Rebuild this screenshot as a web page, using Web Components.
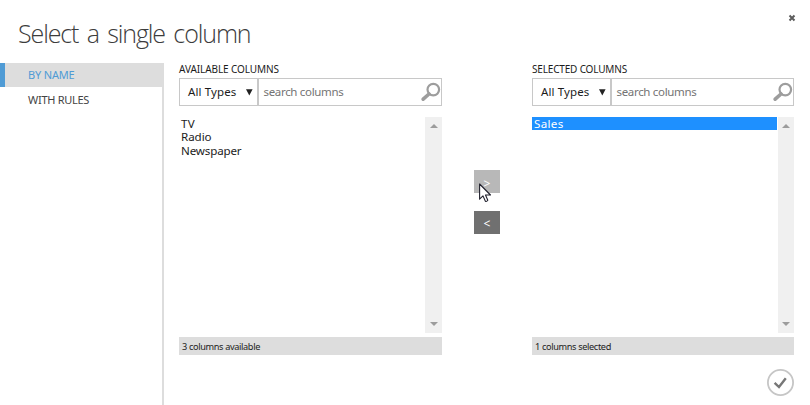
<!DOCTYPE html>
<html lang="en">
<head>
<meta charset="utf-8">
<title>Select a single column</title>
<style>
html, body { margin: 0; height: 100%; background: #fff; overflow: hidden; }
</style>
</head>
<body>
<column-dialog></column-dialog>
<script>
const define = (name, html, setup) => customElements.define(name, class extends HTMLElement {
  connectedCallback() {
    if (this.shadowRoot) return;
    this.attachShadow({ mode: 'open' }).innerHTML = html;
    if (setup) setup(this, this.shadowRoot);
  }
});

/* Single line of text tracked so that it fills the given width. */
define('fit-text', `<style>
:host { display: block; white-space: nowrap; }
span { display: inline-block; white-space: pre; }
</style><span></span>`, (el, root) => {
  const s = root.querySelector('span');
  s.textContent = el.getAttribute('text');
  const diff = Number(el.getAttribute('fit')) - s.getBoundingClientRect().width;
  s.style.letterSpacing = (diff / s.textContent.length).toFixed(3) + 'px';
});

define('nav-item', `<style>
:host { display: block; box-sizing: border-box; height: 24px; padding-left: 28px; font-size: 11px; line-height: 24px; color: #444; }
:host([active]) { background: #ddd; border-left: 5px solid #4f9bd5; padding-left: 23px; color: #4f9bd5; }
</style><slot></slot>`);

define('type-select', `<style>
:host { display: flex; box-sizing: border-box; width: 79px; height: 28px; border: 1px solid #c8c8c8; align-items: center; padding: 0 4px 1px 8px; justify-content: space-between; color: #1c1c1c; font-size: 11.5px; line-height: 16px; }
:host([narrow]) { width: 79px; }
svg { display: block; margin-top: 1px; }
</style><fit-text text="All Types" fit="48.5"></fit-text>
<svg width="7" height="7" viewBox="0 0 7 7"><path d="M0 0.3H6.6L3.3 6.5Z" fill="#222"/></svg>`);

define('search-box', `<style>
:host { display: flex; flex: 1; box-sizing: border-box; height: 28px; border: 1px solid #c8c8c8; align-items: center; justify-content: space-between; padding: 0 0 0 4.5px; color: #747474; font-size: 11.5px; line-height: 16px; }
fit-text { margin-top: -1px; }
svg { display: block; }
</style><fit-text text="search columns" fit="80"></fit-text>
<svg width="20" height="20" viewBox="0 0 20 20" fill="none" stroke="#9d9d9d"><circle cx="12.3" cy="7.6" r="5.8" stroke-width="2.2"/><path d="M8 12L2.2 17.2" stroke-width="3.6" stroke-linecap="round"/></svg>`);

define('scroll-bar', `<style>
:host { display: flex; flex-direction: column; justify-content: space-between; align-items: center; box-sizing: border-box; background: #f0f0f0; padding: 7px 0; }
svg { display: block; }
</style><svg width="8" height="4" viewBox="0 0 8 4"><path d="M0 4L4 0L8 4Z" fill="#9c9c9c"/></svg>
<svg width="8" height="4" viewBox="0 0 8 4"><path d="M0 0L4 4L8 0Z" fill="#9c9c9c"/></svg>`);

define('list-option', `<style>
:host { display: block; height: 13.4px; line-height: 14px; padding-left: 2px; font-size: 11.6px; color: #1c1c1c; }
:host([selected]) { height: 13px; background: #1e90ff; color: #fff; }
</style><slot></slot>`);

define('column-panel', `<style>
:host { display: block; }
.head { height: 15px; line-height: 12px; font-size: 10px; color: #1c1c1c; }
.filters { display: flex; }
.list { display: flex; height: 216px; margin: 11px 0 4px; }
.items { flex: 1; }
scroll-bar { width: 17px; }
:host([narrow]) scroll-bar { width: 16px; margin-left: 1px; }
.foot { height: 18px; background: #ddd; padding-left: 3px; font-size: 9.2px; line-height: 20px; color: #222; }
</style>
<div class="head"><slot name="head"></slot></div>
<div class="filters"><type-select></type-select><search-box></search-box></div>
<div class="list"><div class="items"><slot></slot></div><scroll-bar></scroll-bar></div>
<div class="foot"><slot name="foot"></slot></div>`);

define('move-button', `<style>
:host { display: block; height: 23px; background: #707070; color: #fff; text-align: center; font-size: 12px; line-height: 25px; }
:host([dim]) { background: #b8b8b8; line-height: 27px; }
</style><slot></slot>`);

define('column-dialog', `<style>
:host { display: grid; grid-template: 63px 1fr / 164px 1fr; width: 810px; height: 405px; overflow: hidden; position: relative; background: #fff; font-family: "Noto Sans", "Open Sans", sans-serif; }
header { grid-column: 1 / 3; display: flex; justify-content: space-between; }
h1 { margin: 15px 0 0 18px; font: 300 25px/36px "Open Sans", sans-serif; word-spacing: 3px; color: #3c3c3c; }
.close { margin: 14px 14px 0 0; }
nav { box-sizing: border-box; border-right: 2px solid #ddd; display: flex; flex-direction: column; gap: 1px; }
nav-item[active] { margin-right: -2px; }
main { display: grid; grid-template-columns: 263px 26px 262px; column-gap: 32px; padding-left: 15px; align-content: start; }
column-panel { height: 292px; }
.moves { display: flex; flex-direction: column; gap: 18px; padding-top: 107px; }
.ok { grid-column: 3; justify-self: end; margin-top: 14px; }
svg { display: block; }
.pointer { position: absolute; left: 479px; top: 183px; }
</style>
<header><h1><fit-text text="Select a single column" fit="232.5"></fit-text></h1>
<svg class="close" width="8" height="8" viewBox="0 0 8 8"><path d="M1.5 1.5L6.5 6.5M6.5 1.5L1.5 6.5" stroke="#5c5c5c" stroke-width="2"/></svg></header>
<nav><nav-item active><fit-text text="BY NAME" fit="46.5"></fit-text></nav-item><nav-item><fit-text text="WITH RULES" fit="61"></fit-text></nav-item></nav>
<main style="grid-template-columns:263px 26px 262px;column-gap:32px">
<column-panel>
<fit-text slot="head" text="AVAILABLE COLUMNS" fit="100"></fit-text>
<list-option><fit-text text="TV" fit="14"></fit-text></list-option>
<list-option><fit-text text="Radio" fit="30.5"></fit-text></list-option>
<list-option><fit-text text="Newspaper" fit="60.5"></fit-text></list-option>
<fit-text slot="foot" text="3 columns available" fit="78"></fit-text>
</column-panel>
<div class="moves"><move-button dim>&gt;</move-button><move-button>&lt;</move-button></div>
<column-panel narrow>
<fit-text slot="head" text="SELECTED COLUMNS" fit="95"></fit-text>
<list-option selected><fit-text text="Sales" fit="29.5"></fit-text></list-option>
<fit-text slot="foot" text="1 columns selected" fit="76"></fit-text>
</column-panel>
<svg class="ok" width="27" height="27" viewBox="0 0 27 27" fill="none"><circle cx="13.5" cy="13.5" r="12.6" stroke="#c6c6c6" stroke-width="1.8"/><path d="M7.6 13.8L12 18L18.8 9.2" stroke="#777" stroke-width="2.4"/></svg>
</main>
<svg class="pointer" width="13" height="20" viewBox="0 0 13 20"><path d="M.6 1V16.2L4 12.9L6.4 18.3Q7.7 19 8.8 17.3L6.5 12H11.5Z" fill="#fff" stroke="#20202c" stroke-width="1.1" stroke-linejoin="round"/></svg>`);
</script>
</body>
</html>
